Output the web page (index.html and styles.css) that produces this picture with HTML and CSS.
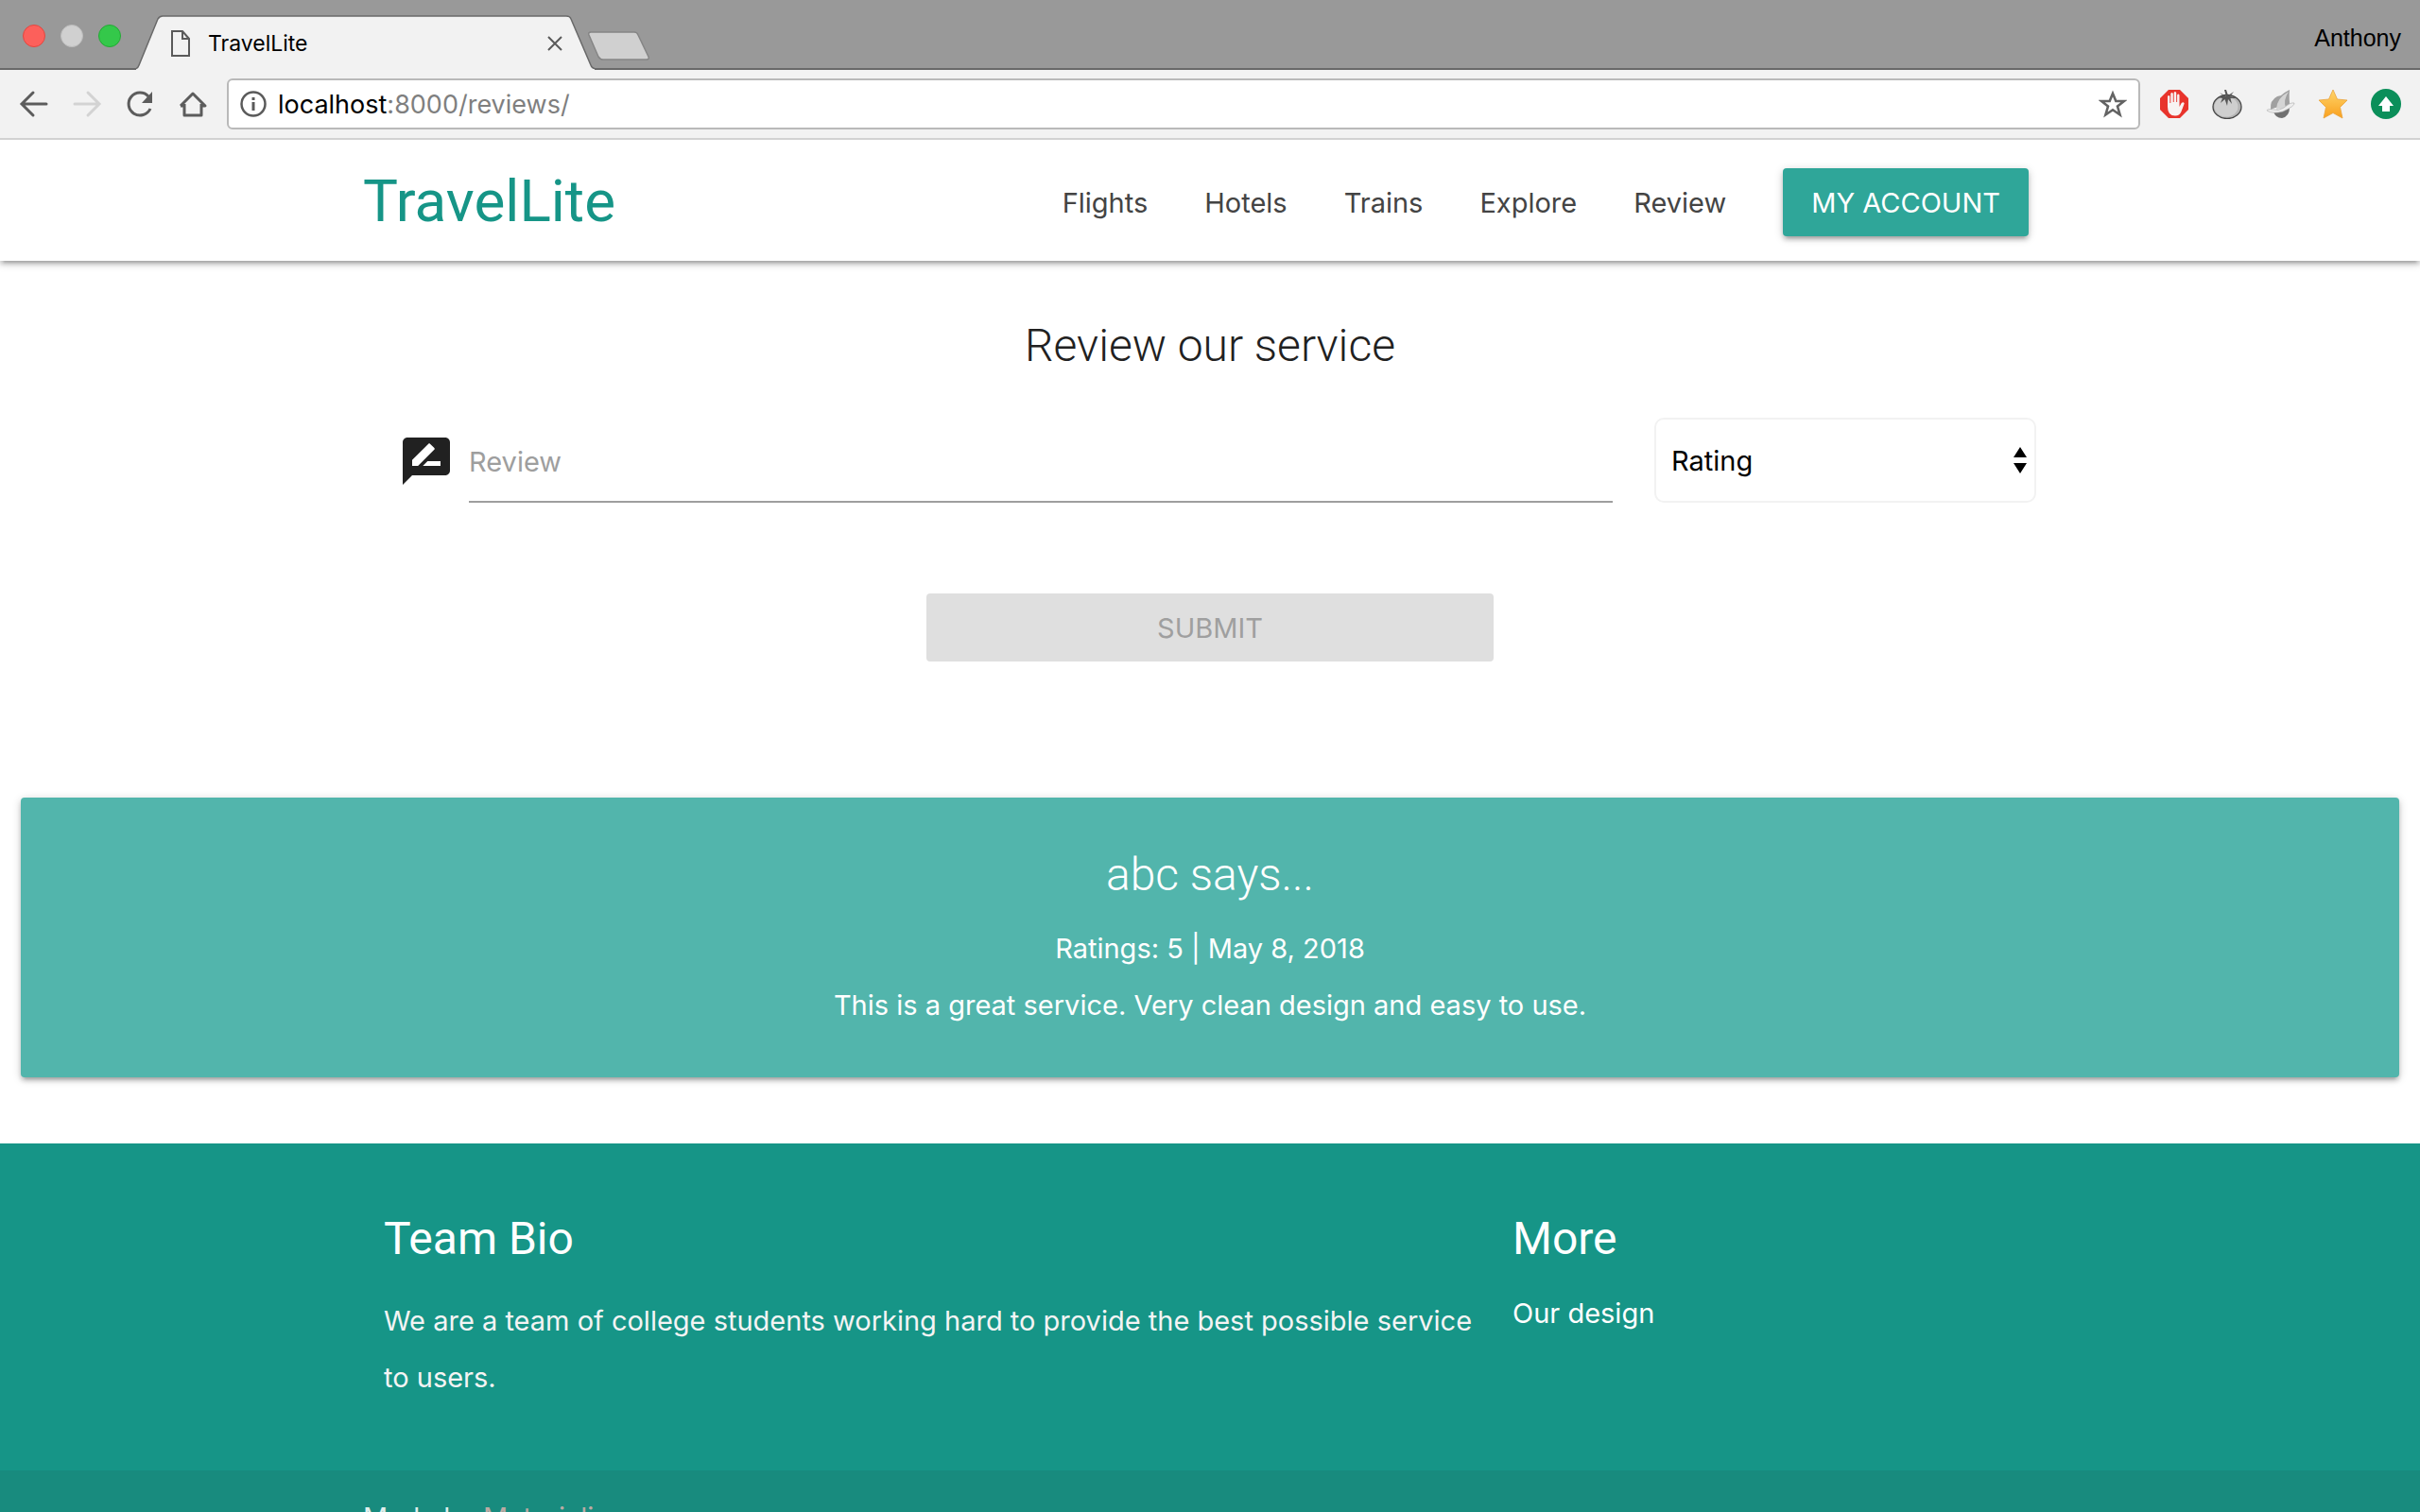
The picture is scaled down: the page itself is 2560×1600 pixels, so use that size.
FILE: index.html
```html
<!DOCTYPE html>
<html lang="en">
<head>
<meta charset="utf-8">
<title>TravelLite</title>
<link rel="stylesheet" href="styles.css">
</head>
<body>
<div class="browser">
  <header class="tabstrip">
    <div class="lights"><span class="light light-close"></span><span class="light light-min"></span><span class="light light-max"></span></div>
    <div class="tab">
      <svg class="tab-shape" viewBox="0 0 485 58" preserveAspectRatio="none" aria-hidden="true"><path d="M0 57 Q2 56 3 53 L23 4 Q25 1 28 1 H455 Q459 1 460 4 L481 53 Q482 56 485 57 V58 H0Z" fill="#f2f2f2"/><path d="M0 56.5 Q2 56 3 53 L23 4 Q25 1 28 1 H455 Q459 1 460 4 L481 53 Q482 56 485 56.5" fill="none" stroke="#696969" stroke-width="1.5"/></svg>
      <div class="tab-body">
        <svg class="doc" viewBox="0 0 22 30" fill="none" stroke="#5a5a5a" stroke-width="2"><path d="M2 2H13L20 10V28H2ZM13 2V10H20"/></svg>
        <span class="tab-title">TravelLite</span>
        <button class="bare" aria-label="Close tab"><svg class="close" viewBox="0 0 16 16" stroke="#5a5a5a" stroke-width="2"><path d="M1 1L15 15M15 1L1 15"/></svg></button>
      </div>
    </div>
    <button class="bare newtab" aria-label="New tab"><svg viewBox="0 0 66 34"><path d="M3 2H49Q52 2 53 5L64 28Q65 31 62 31H16Q13 31 11 28L1 5Q0 2 3 2Z" fill="#d0d0d0" stroke="#858585" stroke-width="1.5"/></svg></button>
    <button class="bare profile">Anthony</button>
  </header>
  <div class="toolbar">
    <div class="navicons">
      <button class="bare" aria-label="Back"><svg class="ico" viewBox="0 0 32 32" fill="none" stroke="#5c5c5c" stroke-width="3" stroke-linecap="round"><path d="M29 16H4M15 4L3 16L15 28"/></svg></button>
      <button class="bare" aria-label="Forward"><svg class="ico" viewBox="0 0 32 32" fill="none" stroke="#d3d3d3" stroke-width="3" stroke-linecap="round"><path d="M3 16H28M17 4L29 16L17 28"/></svg></button>
      <button class="bare" aria-label="Reload"><svg class="ico" viewBox="0 0 32 32"><path d="M25 8A12 12 0 1 0 27 21" fill="none" stroke="#5c5c5c" stroke-width="3"/><path d="M29 3V15H18Z" fill="#5c5c5c"/></svg></button>
      <button class="bare" aria-label="Home"><svg class="ico" viewBox="0 0 32 32" fill="none" stroke="#5c5c5c" stroke-width="3" stroke-linejoin="round"><path d="M7 16V28H25V16M3 18L16 5L29 18H25M7 18H3"/></svg></button>
    </div>
    <div class="omnibox">
      <svg class="info" viewBox="0 0 28 28"><circle cx="14" cy="14" r="12.5" fill="none" stroke="#5a5a5a" stroke-width="2.5"/><path d="M12.5 12h3v9h-3zM12.5 7h3v3h-3z" fill="#5a5a5a"/></svg>
      <span class="url">localhost<span class="url-rest">:8000/reviews/</span></span>
      <button class="bare" aria-label="Bookmark"><svg class="bookmark" viewBox="0 0 30 30" fill="none" stroke="#636363" stroke-width="2.6"><path d="M15 4L18.3 12H27L20 17.5L22.6 26.5L15 21.3L7.4 26.5L10 17.5L3 12H11.7Z"/></svg></button>
    </div>
    <div class="exts">
      <svg class="ext" viewBox="0 0 32 32"><path d="M10 1H22L31 10V22L22 31H10L1 22V10Z" fill="#e8342c"/><path d="M9 19V8q1.200-2 2.400 0V15h.9V5q1.200-2 2.500 0V14h.9V4q1.200-2 2.500 0V14h.9V6.500q1.200-2 2.400 0V19l2.200-4q2-1.800 3 .4L23.500 24q-1.800 4.500-6.500 4.500Q9 28.500 9 19Z" fill="#f8f3f2"/></svg>
      <svg class="ext" viewBox="0 0 32 32"><ellipse cx="16" cy="19" rx="15" ry="12.500" fill="#b4b4b4" stroke="#444" stroke-width="1.300"/><ellipse cx="15" cy="19" rx="12.500" ry="10.500" fill="#cecece"/><path d="M15 8L13 1L15 1L17 7L23 3L19 8L27 10L19.500 10L21 16L17 11L16 18L13.500 11L9 15L11 10L6 9L12 7.500L8 4Z" fill="#555"/></svg>
      <svg class="ext" viewBox="0 0 32 32"><path d="M6 22Q5 12 13 8L17 7Q20 4 26 1Q25 12 27 20Q18 16 6 22Z" fill="#a0a0a0"/><path d="M12 22Q12 10 25 3Q19 12 22 20Z" fill="#d4d4d4"/><path d="M9 24Q18 25 26 20Q26 29 18 31Q11 31 9 24Z" fill="#707070"/><path d="M2 23Q2 21 9 22Q14 24 20 20Q27 14 31 15Q32 18 19 24Q8 27 2 23Z" fill="#eee" stroke="#aaa" stroke-width=".6"/></svg>
      <svg class="ext" viewBox="0 0 32 32"><defs><linearGradient id="gold" x1="0" y1="0" x2="0" y2="1"><stop offset="0" stop-color="#ffd56a"/><stop offset="1" stop-color="#f9a01e"/></linearGradient></defs><path d="M16 1L20.500 11L31 12L23.500 19.500L26 31L16 25.500L6 31L8.500 19.500L1 12L11.500 11Z" fill="url(#gold)" stroke="#e9a33d" stroke-width=".8" stroke-linejoin="round"/></svg>
      <svg class="ext" viewBox="0 0 32 32"><circle cx="16" cy="16" r="16" fill="#0b8f5a"/><path d="M16 8L24 18H20V24H12V18H8Z" fill="#fff"/></svg>
    </div>
  </div>
  <div class="page">
    <nav class="navbar">
      <div class="container nav-inner">
        <a class="brand" href="#">TravelLite</a>
        <div class="links">
          <a href="#">Flights</a><a href="#">Hotels</a><a href="#">Trains</a><a href="#">Explore</a><a href="#">Review</a>
          <button class="btn account">MY ACCOUNT</button>
        </div>
      </div>
    </nav>
    <main>
      <h1 class="title">Review our service</h1>
      <form class="form container">
        <div class="form-row">
          <div class="field">
            <svg class="rate" viewBox="2 2 20 20" aria-hidden="true"><path fill="#212121" d="M20 2H4c-1.100 0-1.990.9-1.990 2L2 22l4-4h14c1.100 0 2-.9 2-2V4c0-1.100-.9-2-2-2zM6 14v-2.470l6.880-6.880c.2-.2.510-.2.710 0l1.770 1.770c.2.2.2.510 0 .710L8.470 14H6zm12 0h-7.500l2-2H18v2z"/></svg>
            <input class="review" type="text" placeholder="Review" aria-label="Review">
          </div>
          <div class="rating">
            <select class="select" aria-label="Rating"><option>Rating</option></select>
            <svg class="arrows" viewBox="0 0 14 28" aria-hidden="true"><path d="M7 0L14 11H0ZM7 28L14 17H0Z"/></svg>
          </div>
        </div>
        <button class="btn submit" type="submit" disabled>SUBMIT</button>
      </form>
      <article class="card">
        <h2 class="card-title">abc says...</h2>
        <p>Ratings: 5 | May 8, 2018</p>
        <p>This is a great service. Very clean design and easy to use.</p>
      </article>
    </main>
    <footer class="footer">
      <div class="container footer-cols">
        <section class="bio"><h2>Team Bio</h2><p>We are a team of college students working hard to provide the best possible service to users.</p></section>
        <section class="more"><h2>More</h2><a href="#">Our design</a></section>
      </div>
      <div class="copyright"><div class="container">Made by <a href="#">Materialize</a></div></div>
    </footer>
  </div>
</div>
</body>
</html>
```
FILE: styles.css
```css
* { box-sizing: border-box; }
body { margin: 0; font-family: Inter, "Liberation Sans", sans-serif; font-size: 29px; color: #212121; background: #fff; }
svg { display: block; flex: none; }
a { color: inherit; text-decoration: none; }
h1, h2, p { margin: 0; }
input, select, button { font: inherit; }
.bare { border: 0; padding: 0; background: none; color: inherit; }
.browser { display: flex; flex-direction: column; height: 100vh; overflow: hidden; }

.tabstrip { display: flex; flex: none; align-items: flex-end; height: 74px; background: #999; border-bottom: 2px solid #696969; }
.lights { display: flex; gap: 16px; padding: 0 16px 22px 24px; }
.light { width: 24px; height: 24px; border-radius: 50%; border: 1px solid; }
.light-close { background: #fc605b; border-color: #e2463f; }
.light-min { background: #d0d0d0; border-color: #bcbcbc; }
.light-max { background: #34c84a; border-color: #24a935; }
.tab { display: grid; width: 485px; height: 58px; margin-bottom: -2px; }
.tab > * { grid-area: 1 / 1; }
.tab-shape { width: 100%; height: 58px; }
.tab-body { display: flex; align-items: center; padding: 2px 34px 0 36px; font-size: 23px; color: #000; }
.doc { width: 22px; height: 30px; margin-right: 18px; }
.tab-title { flex: 1; }
.close { width: 16px; height: 16px; }
.newtab { width: 66px; height: 34px; margin: 0 0 6px -7px; }
.profile { margin: 0 20px 18px auto; font: 25px/28px "Liberation Sans", sans-serif; color: #000; }

.toolbar { display: flex; flex: none; align-items: center; height: 74px; padding: 0 20px; background: #f2f2f2; border-bottom: 2px solid #d2d2d2; }
.navicons { display: flex; gap: 24px; margin-right: 20px; }
.ico { width: 32px; height: 32px; }
.omnibox { display: flex; flex: 1; align-items: center; height: 54px; padding: 0 12px; background: #fff; border: 2px solid #b9b9b9; border-radius: 6px; }
.info { width: 28px; height: 28px; margin-right: 12px; }
.url { flex: 1; font-size: 27px; color: #000; }
.url-rest { color: #7f7f7f; }
.bookmark { width: 30px; height: 30px; }
.exts { display: flex; gap: 24px; margin-left: 20px; }
.ext { width: 32px; height: 32px; }

.page { flex: 1; min-height: 0; overflow: hidden; }
.container { width: 70%; margin: 0 auto; }
.navbar { height: 128px; background: #fff; box-shadow: 0 4px 4px rgba(0,0,0,.14), 0 6px 2px -4px rgba(0,0,0,.12), 0 2px 10px rgba(0,0,0,.2); }
.nav-inner { display: flex; align-items: center; justify-content: space-between; height: 100%; }
.brand { font-family: Roboto, sans-serif; font-size: 62px; color: #169587; }
.links { display: flex; align-items: center; gap: 60px; padding: 4px 30px 0 0; color: #444; }
.btn { height: 72px; padding: 0 30px; border: 0; border-radius: 4px; }
.account { color: #fff; background: #2fa699; box-shadow: 0 4px 4px rgba(0,0,0,.14), 0 6px 2px -4px rgba(0,0,0,.12), 0 2px 10px rgba(0,0,0,.2); }
.title { padding-top: 60px; font-family: Roboto, sans-serif; font-size: 48px; font-weight: 300; line-height: 60px; text-align: center; }
.form-row { display: flex; justify-content: space-between; padding: 46px 22px 0 42px; }
.field { display: flex; flex: 1; gap: 20px; margin-right: 44px; }
.rate { width: 50px; height: 50px; margin-top: 21px; }
.review { flex: 1; height: 90px; padding: 4px 0 0; border: 0; border-bottom: 2px solid #9e9e9e; background: none; }
.review::placeholder { color: #9e9e9e; opacity: 1; }
.rating { display: grid; width: 404px; }
.rating > * { grid-area: 1 / 1; }
.select { height: 90px; padding: 0 16px; border: 2px solid #f2f2f2; border-radius: 10px; background: #fff; color: #000; appearance: none; }
.arrows { width: 14px; height: 28px; align-self: center; justify-self: end; margin-right: 10px; pointer-events: none; }
.submit { display: block; width: 600px; margin: 96px auto 0; color: #9f9f9f; background: #dfdfdf; }
.card { margin: 144px 22px 70px; padding: 46px 48px; height: 296px; border-radius: 4px; background: #52b5ac; color: #fff; text-align: center; line-height: 60px; box-shadow: 0 4px 4px rgba(0,0,0,.14), 0 6px 2px -4px rgba(0,0,0,.12), 0 2px 10px rgba(0,0,0,.2); }
.card-title { margin-bottom: 12px; font-family: Roboto, sans-serif; font-size: 48px; font-weight: 300; line-height: 72px; }
.footer { background: #169587; color: #fff; }
.footer-cols { display: flex; height: 346px; padding: 68px 22px 0; line-height: 60px; }
.footer h2 { font-family: Roboto, sans-serif; font-size: 48px; font-weight: 400; line-height: 66px; }
.bio { width: 1194px; padding-right: 24px; }
.bio p { margin-top: 24px; color: #f4f4f4; }
.more a { display: block; margin-top: 16px; }
.copyright { padding-top: 20px; line-height: 60px; background: #188b7e; color: #e0efed; }
.copyright a { color: #bcaaa4; }
```
